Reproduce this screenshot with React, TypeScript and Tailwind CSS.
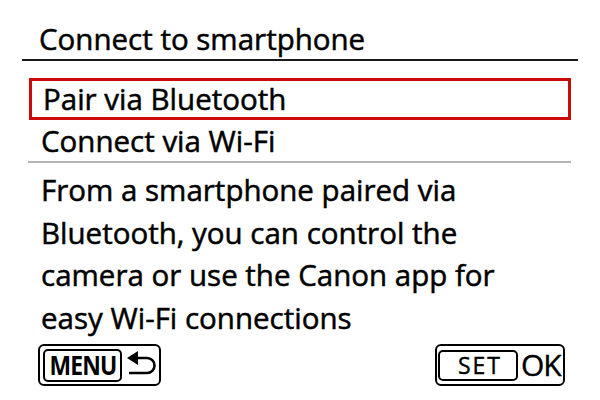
import React from 'react';

// Canon style "Connect to smartphone" menu screen
const font = { fontFamily: '"Open Sans", "Noto Sans", sans-serif' };

const ReturnArrow = () => (
  <svg width="30" height="28" viewBox="0 0 30 28" className="block">
    <path d="M0 7 L11 0 L11 14 Z" fill="#000" />
    <path d="M10 7 H20 A7.5 7.5 0 0 1 20 22 H2" fill="none" stroke="#000" strokeWidth="2.6" />
  </svg>
);

const App: React.FC = () => {
  return (
    <div className="w-[600px] h-[400px] bg-white text-black overflow-hidden" style={font}>
      <div className="[-webkit-text-stroke:0.5px_black]">
        <div className="pt-[19px] pl-[39px] text-[29.5px] leading-[40px]">Connect to smartphone</div>
        <div className="ml-[22px] w-[556px] h-[2px] bg-[#1a1a1a]" />

        <div className="mt-[17px] ml-[29px] w-[542px] h-[42px] border-[3px] border-[#cc0a0a] pl-[11px] text-[29.5px] leading-[36px]">
          Pair via Bluetooth
        </div>
        <div className="pl-[41px] text-[29.5px] leading-[41px]">Connect via Wi-Fi</div>
        <div className="ml-[28px] w-[543px] h-[2px] bg-[#b4b4b4]" />

        <div className="mt-[6px] pl-[41px] text-[29.5px] leading-[42.5px]">
          <div>From a smartphone paired via</div>
          <div>Bluetooth, you can control the</div>
          <div>camera or use the Canon app for</div>
          <div>easy Wi-Fi connections</div>
        </div>
      </div>

      <div className="mt-[5px] flex justify-between pl-[38px] pr-[35px]">
        <div className="flex items-center h-[42px] w-[123px] border-2 border-black rounded-[6px] pl-[3px]">
          <div className="h-[33px] w-[79px] border-2 border-black rounded-[5px] flex items-center justify-center overflow-hidden">
            <span className="text-[26px] font-bold leading-none tracking-[-1px] scale-x-[0.88]">MENU</span>
          </div>
          <div className="ml-[5px]">
            <ReturnArrow />
          </div>
        </div>
        <div className="flex items-center h-[42px] w-[130px] border-2 border-black rounded-[6px] pl-[1px] [-webkit-text-stroke:0.4px_black]">
          <div className="h-[31px] w-[80px] border-2 border-black rounded-[5px] flex items-center justify-center text-[23px] leading-none tracking-[2px] pl-[4px]">
            SET
          </div>
          <div className="ml-[3px] text-[30px] leading-none tracking-[-1px]">OK</div>
        </div>
      </div>
    </div>
  );
};

export default App;
